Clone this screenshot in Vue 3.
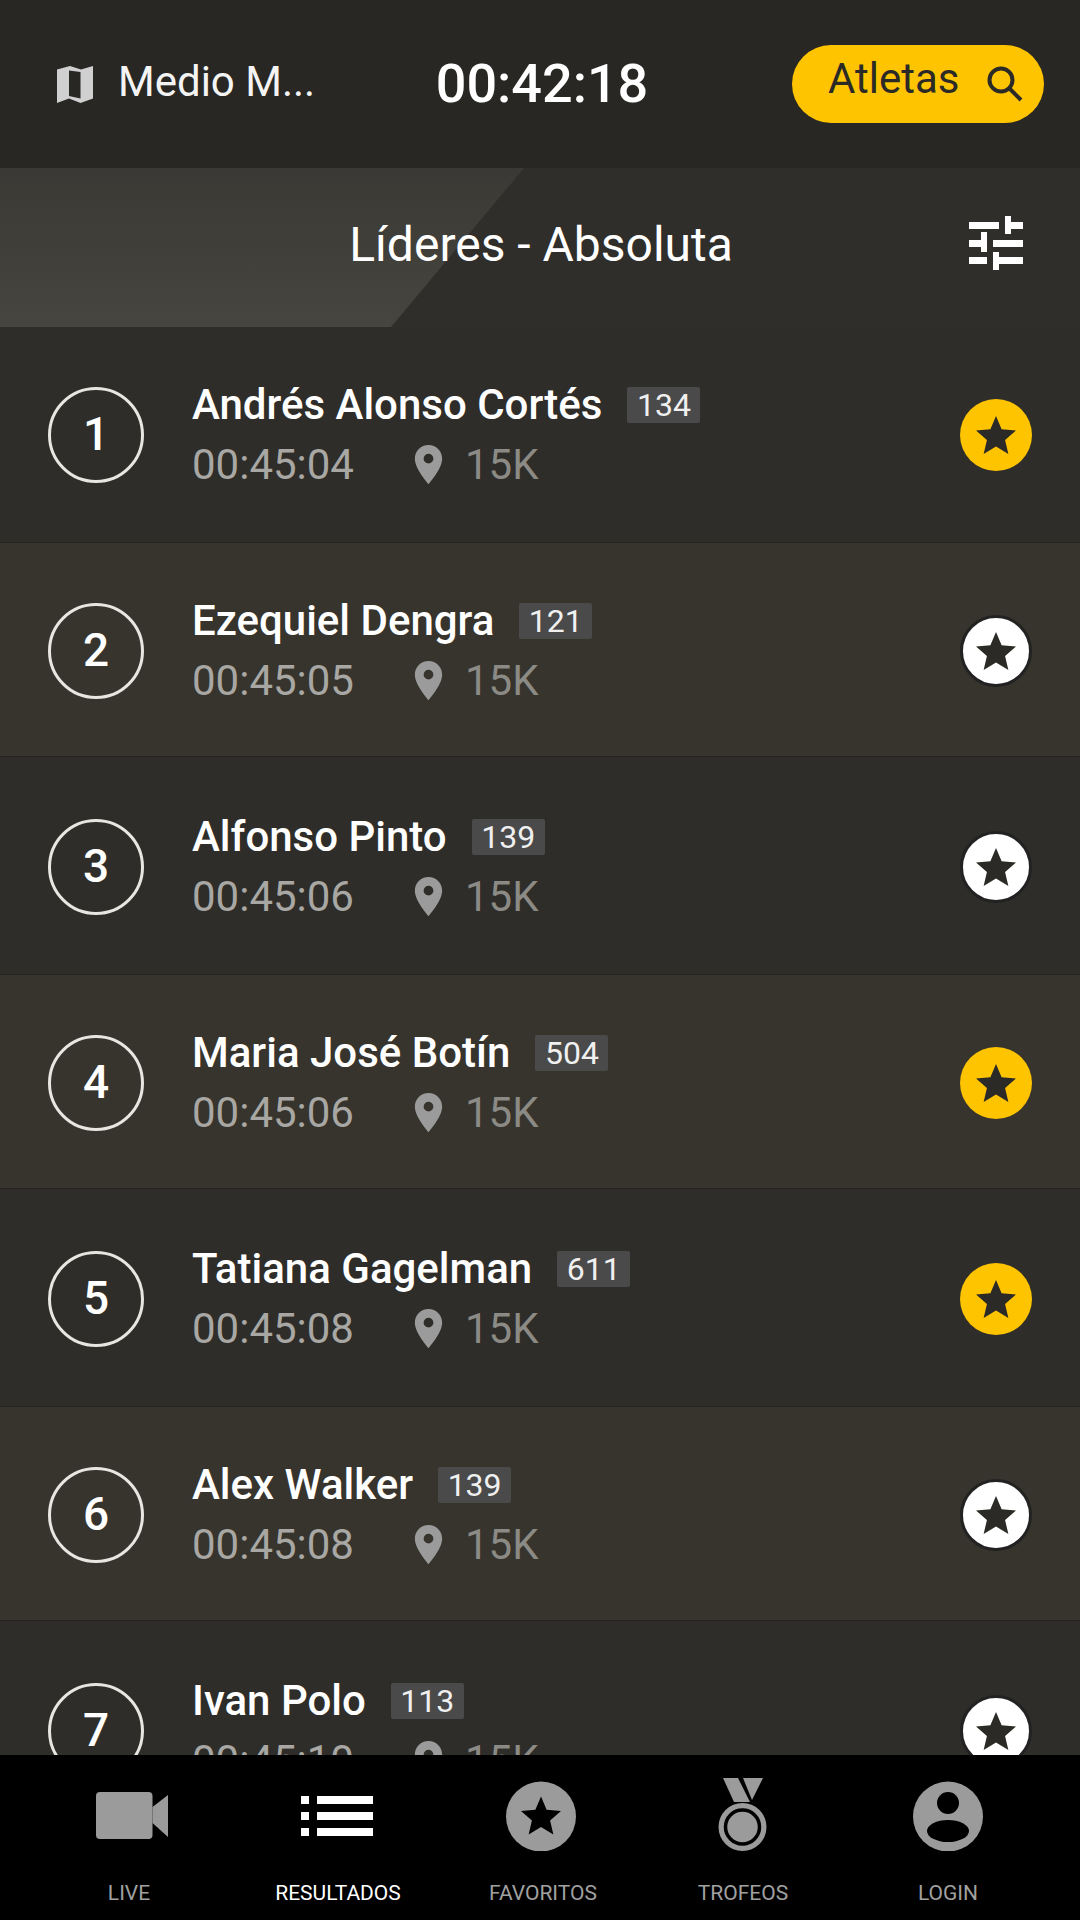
<template>
  <div class="page">
    <!-- Top bar -->
    <header class="topbar">
      <div class="race">
        <svg class="map-icon" viewBox="0 0 36 37">
          <path fill-rule="evenodd" d="M0 3.5 13 0l11 3.5L36 0v32.5L23.500 37 12 32.500 0 37zM12 4.500V30l11.500 2.500V6z" />
        </svg>
        <span>Medio M...</span>
      </div>
      <div class="clock">00:42:18</div>
      <button class="search">
        <span>Atletas</span>
        <svg viewBox="0 0 36 36">
          <circle cx="14" cy="14" r="11.500" />
          <path d="M22.500 22.500 34 34" />
        </svg>
      </button>
    </header>

    <!-- Title -->
    <div class="titlebar">
      <div class="wedge"></div>
      <h1>Líderes - Absoluta</h1>
      <svg class="filter" viewBox="0 0 54 54">
        <rect x="0" y="6" width="30" height="7" />
        <rect x="36" y="0" width="6" height="18" />
        <rect x="42" y="6" width="12" height="7" />
        <rect x="0" y="24" width="12" height="7" />
        <rect x="12" y="16" width="6" height="20" />
        <rect x="24" y="24" width="30" height="7" />
        <rect x="0" y="41" width="18" height="7" />
        <rect x="24" y="36" width="6" height="18" />
        <rect x="30" y="41" width="24" height="7" />
      </svg>
    </div>

    <!-- Leaderboard -->
    <div class="list">
      <div v-for="(a, i) in athletes" :key="i" class="row" :class="{ alt: i % 2 === 1 }">
        <div class="pos"><span>{{ i + 1 }}</span></div>
        <div class="info">
          <div class="line1">
            <span class="name">{{ a.name }}</span>
            <span class="dorsal">{{ a.dorsal }}</span>
          </div>
          <div class="line2">
            <span class="time">{{ a.time }}</span>
            <svg class="pin" viewBox="5 2 14 20">
              <path fill-rule="evenodd" d="M12 2C8.130 2 5 5.130 5 9c0 5.250 7 13 7 13s7-7.750 7-13c0-3.870-3.130-7-7-7zm0 9.500a2.500 2.500 0 1 1 0-5 2.500 2.500 0 0 1 0 5z" />
            </svg>
            <span class="point">15K</span>
          </div>
        </div>
        <div class="fav" :class="{ on: a.fav }">
          <svg viewBox="0 0 40 38">
            <path :d="starPath" />
          </svg>
        </div>
      </div>
    </div>

    <!-- Bottom navigation -->
    <nav class="tabs">
      <div class="tab">
        <svg viewBox="0 0 80 73">
          <rect x="7" y="14" width="56.500" height="47" rx="4" />
          <path d="M63.500 29 79 17v42L63.500 45z" />
        </svg>
        <span>LIVE</span>
      </div>
      <div class="tab active">
        <svg viewBox="0 0 80 73">
          <rect x="3" y="18" width="8" height="8" />
          <rect x="3" y="34" width="8" height="8" />
          <rect x="3" y="50" width="8" height="8" />
          <rect x="19" y="18" width="56" height="8" />
          <rect x="19" y="34" width="56" height="8" />
          <rect x="19" y="50" width="56" height="8" />
        </svg>
        <span>RESULTADOS</span>
      </div>
      <div class="tab">
        <svg viewBox="0 0 80 73">
          <circle cx="38" cy="38.500" r="35" />
          <path class="cut" transform="translate(18 18.500)" :d="starPath" />
        </svg>
        <span>FAVORITOS</span>
      </div>
      <div class="tab">
        <svg viewBox="0 0 80 73">
          <path d="M20 0h15l12 24H31z" />
          <path d="M40 0h20L49 22z" />
          <circle cx="39.500" cy="49" r="24" />
          <circle class="ring" cx="39.500" cy="49" r="17" />
        </svg>
        <span>TROFEOS</span>
      </div>
      <div class="tab">
        <svg viewBox="0 0 80 73">
          <circle cx="40" cy="38.500" r="35" />
          <circle class="cut" cx="40" cy="25" r="11" />
          <ellipse class="cut" cx="40" cy="53" rx="21" ry="11" />
        </svg>
        <span>LOGIN</span>
      </div>
    </nav>
  </div>
</template>

<script setup>
const starPath = 'M20 30.540 32.360 38l-3.280-14.060L40 14.480l-14.380-1.220L20 0l-5.620 13.260L0 14.480l10.920 9.460L7.640 38z'

const athletes = [
  { name: 'Andrés Alonso Cortés', dorsal: 134, time: '00:45:04', fav: true },
  { name: 'Ezequiel Dengra', dorsal: 121, time: '00:45:05', fav: false },
  { name: 'Alfonso Pinto', dorsal: 139, time: '00:45:06', fav: false },
  { name: 'Maria José Botín', dorsal: 504, time: '00:45:06', fav: true },
  { name: 'Tatiana Gagelman', dorsal: 611, time: '00:45:08', fav: true },
  { name: 'Alex Walker', dorsal: 139, time: '00:45:08', fav: false },
  { name: 'Ivan Polo', dorsal: 113, time: '00:45:10', fav: false },
]
</script>

<style>
html,
body {
  margin: 0;
  background: #000;
}
</style>

<style scoped>
.page {
  width: 1080px;
  height: 1920px;
  display: flex;
  flex-direction: column;
  overflow: hidden;
  font-family: Roboto, "Liberation Sans", sans-serif;
  color: #fff;
  background: #2e2d29;
}

/* Top bar */
.topbar {
  height: 168px;
  flex-shrink: 0;
  display: grid;
  grid-template-columns: 1fr auto 1fr;
  align-items: center;
  padding: 0 36px 0 40px;
  background: #282723;
}

.race {
  display: flex;
  align-items: center;
  gap: 25px;
  padding-left: 17px;
  font-size: 42px;
  color: #f4f4f4;
}

.race span {
  margin-top: -5px;
}

.map-icon {
  width: 36px;
  height: 37px;
  fill: #d0d0d0;
}

.clock {
  margin-top: -2px;
  font-size: 54px;
  font-weight: 500;
}

.search {
  justify-self: end;
  width: 252px;
  height: 78px;
  display: flex;
  align-items: center;
  justify-content: space-between;
  padding: 0 21px 0 36px;
  border: 0;
  border-radius: 39px;
  background: #ffc400;
  color: #2b2a26;
  font-family: inherit;
  font-size: 42px;
}

.search span {
  margin-top: -11px;
}

.search svg {
  width: 36px;
  height: 36px;
  fill: none;
  stroke: #2b2a26;
  stroke-width: 4;
}

/* Title */
.titlebar {
  position: relative;
  height: 159px;
  flex-shrink: 0;
  display: grid;
  grid-template-columns: 1fr auto 1fr;
  align-items: center;
  padding: 0 55px 0 57px;
  background: #2f2e2a;
}

.wedge {
  position: absolute;
  inset: 0;
  width: 524px;
  background: linear-gradient(#3a3935, #46453f);
  clip-path: polygon(0 0, 100% 0, 391px 100%, 0 100%);
}

.titlebar h1 {
  position: relative;
  grid-column: 2;
  margin: -7px 0 0;
  font-size: 48px;
  font-weight: 400;
}

.filter {
  grid-column: 3;
  justify-self: end;
  width: 54px;
  height: 54px;
  margin: -9px 2px 0 0;
  fill: #fff;
}

/* Leaderboard */
.list {
  flex: 1;
  min-height: 0;
  overflow: hidden;
}

/* light rows are a little shorter than dark ones, the content keeps a 216px pitch */
.row {
  height: 218px;
  box-sizing: border-box;
  display: flex;
  align-items: center;
  padding: 2px 48px 0;
  border-bottom: 1px solid #262522;
  background: #2e2d29;
}

.row:first-child {
  height: 216px;
  padding-top: 0;
}

.row.alt {
  height: 214px;
  background: #36342d;
}

.pos {
  width: 96px;
  height: 96px;
  flex-shrink: 0;
  box-sizing: border-box;
  display: flex;
  align-items: center;
  justify-content: center;
  border: 3px solid #e8e6e0;
  border-radius: 50%;
  font-size: 46px;
  font-weight: 500;
}

.pos span {
  margin-top: -2px;
}

.info {
  flex: 1;
  margin-left: 48px;
}

.line1 {
  display: flex;
  align-items: center;
  gap: 25px;
}

.name {
  font-size: 42px;
  font-weight: 500;
}

.dorsal {
  width: 73px;
  height: 36px;
  display: flex;
  align-items: center;
  justify-content: center;
  border-radius: 2px;
  background: #4a4a4a;
  font-size: 32px;
  color: #f0f0f0;
}

.line2 {
  display: flex;
  align-items: center;
  margin-top: 11px;
  font-size: 42px;
}

.time {
  color: #a8a7a3;
}

.pin {
  width: 29px;
  height: 39px;
  margin-left: 60px;
  fill: #9b9b9b;
}

.point {
  margin-left: 22px;
  color: #8b8a85;
}

.fav {
  width: 72px;
  height: 72px;
  flex-shrink: 0;
  box-sizing: border-box;
  display: flex;
  align-items: center;
  justify-content: center;
  border: 3px solid #222;
  border-radius: 50%;
  background: #fff;
}

.fav.on {
  border: 0;
  background: #ffc400;
}

.fav svg {
  width: 40px;
  height: 38px;
  fill: #2b2a26;
}

/* Bottom navigation */
.tabs {
  height: 165px;
  flex-shrink: 0;
  box-sizing: border-box;
  display: grid;
  grid-template-columns: 210px 208px 202px 198px 212px;
  padding: 23px 0 0 24px;
  background: #000;
}

.tab {
  display: flex;
  flex-direction: column;
  align-items: center;
  font-size: 21px;
  color: #a0a0a0;
}

.tab svg {
  width: 80px;
  height: 73px;
  margin-bottom: 30px;
  fill: #9b9b9b;
}

.tab.active {
  color: #fff;
}

.tab.active svg {
  fill: #fff;
}

.tab .cut {
  fill: #000;
}

.tab .ring {
  fill: #9b9b9b;
  stroke: #000;
  stroke-width: 3.500;
}
</style>
